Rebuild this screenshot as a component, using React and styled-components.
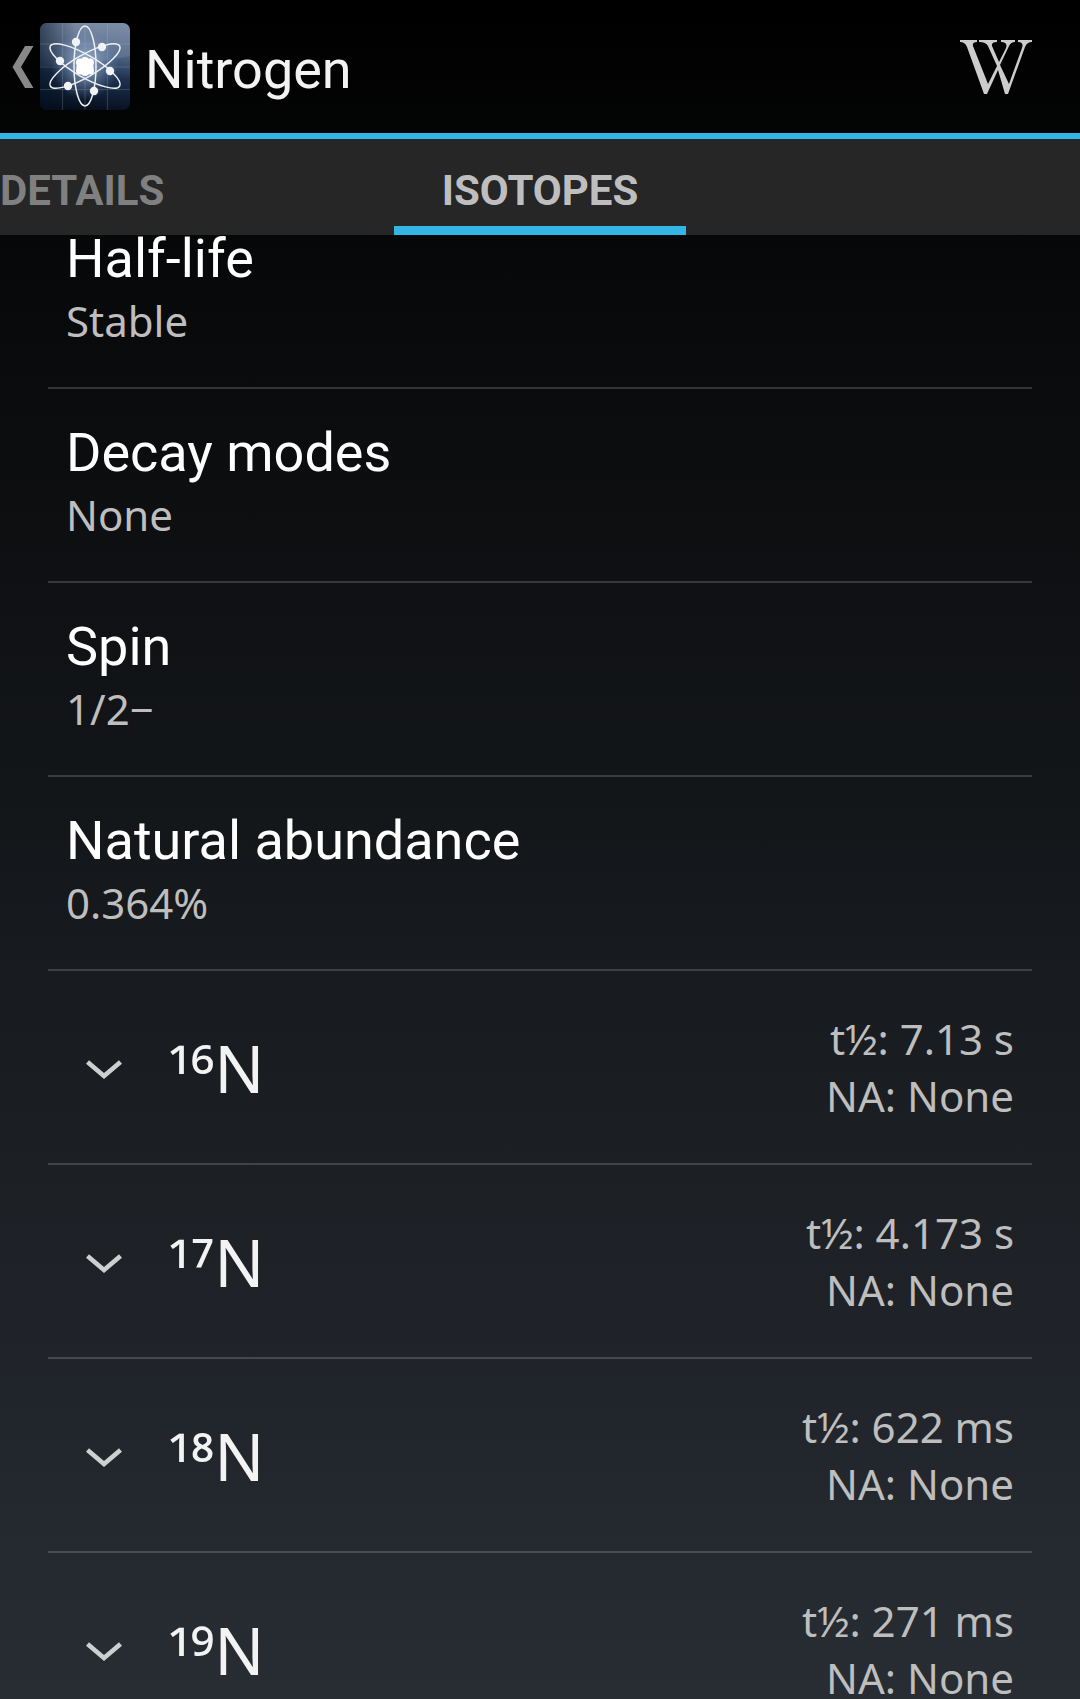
import React, { useState } from "react";
import styled, { createGlobalStyle } from "styled-components";

const GlobalStyle = createGlobalStyle`
  *, *::before, *::after { box-sizing: border-box; }
  html { background: #000; }
  body { margin: 0; font-family: "Noto Sans", "Open Sans", sans-serif; color: #f3f3f3; }
  h1, h2, p, ul { margin: 0; padding: 0; }
  button { border: 0; padding: 0; margin: 0; background: none; color: inherit; font: inherit; cursor: pointer; }
`;

const Screen = styled.div`
  display: flex;
  flex-direction: column;
  height: 100vh;
  overflow: hidden;
  background: linear-gradient(#000000, #070809 15%, #282d34);
`;

const ActionBar = styled.header`
  display: flex;
  align-items: center;
  flex: none;
  height: 139px;
  padding: 0 48px 0 12px;
  border-bottom: 6px solid #33b5e5;
`;

const UpButton = styled.button`
  display: flex;
  align-items: center;
  gap: 6px;
`;

const Title = styled.h1`
  flex: 1;
  padding: 6px 0 0 15px;
  font: 400 54px/64px Roboto, sans-serif;
`;

const WikiButton = styled.button`
  display: flex;
  color: #cccccc;
`;

const TabStrip = styled.nav`
  display: grid;
  grid-template-columns: 1fr auto 1fr;
  flex: none;
  height: 96px;
  background: #252625;
`;

const Tab = styled.button`
  justify-self: start;
  padding: ${(p) => (p.$active ? "17px 48px 0" : "17px 0 0")};
  border-bottom: 9px solid ${(p) => (p.$active ? "#33b5e5" : "transparent")};
  color: ${(p) => (p.$active ? "#bebebe" : "#808080")};
  font: 700 42px/48px Roboto, sans-serif;
`;

const Viewport = styled.main`
  flex: 1;
  min-height: 0;
  overflow: hidden;
`;

const List = styled.ul`
  margin: -40px 48px 0;
  list-style: none;
`;

const Item = styled.li`
  height: 194px;
  border-bottom: 2px solid rgba(255, 255, 255, 0.17);
`;

const Property = styled.div`
  display: flex;
  flex-direction: column;
  gap: 2px;
  padding: 32px 18px 0;
`;

const PropertyName = styled.h2`
  color: #ffffff;
  font: 400 54px/63px Roboto, sans-serif;
`;

const Secondary = styled.p`
  color: #bebebe;
  font-size: 42px;
  line-height: 57px;
`;

const IsotopeButton = styled.button`
  display: flex;
  align-items: center;
  width: 100%;
  height: 100%;
  padding: 0 18px 0 38px;
`;

const Nuclide = styled.span`
  flex: 1;
  padding-left: 46px;
  text-align: left;
  font-size: 66px;
  line-height: 90px;
`;

const Mass = styled.span`
  line-height: 0;
  vertical-align: -8px;
`;

const Summary = styled.div`
  text-align: right;
`;

const properties = [
  { name: "Half-life", value: "Stable" },
  { name: "Decay modes", value: "None" },
  { name: "Spin", value: "1/2−" },
  { name: "Natural abundance", value: "0.364%" },
];

const isotopes = [
  { mass: "¹⁶", halfLife: "7.13 s", abundance: "None" },
  { mass: "¹⁷", halfLife: "4.173 s", abundance: "None" },
  { mass: "¹⁸", halfLife: "622 ms", abundance: "None" },
  { mass: "¹⁹", halfLife: "271 ms", abundance: "None" },
];

const electrons = [
  [36, 19],
  [62, 24],
  [20, 38],
  [70, 48],
  [28, 63],
  [54, 68],
];

function BackArrow() {
  return (
    <svg width="22" height="42" viewBox="0 0 22 42" aria-hidden="true">
      <path d="M13 0H21.5L9 21L21.5 42H13L0.5 21Z" fill="#888" />
    </svg>
  );
}

function AtomIcon() {
  return (
    <svg width="90" height="87" viewBox="0 0 90 87" aria-hidden="true">
      <defs>
        <linearGradient id="sky" x1="0.5" y1="0" x2="0.4" y2="1">
          <stop offset="0" stopColor="#72839c" />
          <stop offset="0.35" stopColor="#4c6282" />
          <stop offset="0.6" stopColor="#1c304e" />
          <stop offset="1" stopColor="#050d1b" />
        </linearGradient>
        <linearGradient id="shade" x1="0" y1="0" x2="1" y2="0">
          <stop offset="0" stopColor="#04101f" stopOpacity="0.55" />
          <stop offset="0.4" stopColor="#04101f" stopOpacity="0" />
        </linearGradient>
        <radialGradient id="glow">
          <stop offset="0" stopColor="#e4efff" stopOpacity="0.85" />
          <stop offset="0.4" stopColor="#a9c1e4" stopOpacity="0.45" />
          <stop offset="1" stopColor="#7f9cc6" stopOpacity="0" />
        </radialGradient>
        <clipPath id="tile">
          <rect width="90" height="87" rx="7" />
        </clipPath>
      </defs>
      <g clipPath="url(#tile)">
        <rect width="90" height="87" fill="url(#sky)" />
        <path d="M0 43Q50 42 90 33V0H0Z" fill="#a3b4cc" opacity="0.18" />
        <rect width="90" height="87" fill="url(#shade)" />
        <path d="M22.5 0V87M45 0V87M67.5 0V87M0 21H90M0 44H90M0 66.5H90" stroke="#b7cae4" strokeOpacity="0.2" strokeWidth="1.2" />
        <circle cx="45" cy="43" r="34" fill="url(#glow)" />
      </g>
      <g fill="none" stroke="#eceff4" strokeWidth="1.5">
        {[0, 60, 120].map((angle) => (
          <ellipse key={angle} cx="45" cy="43" rx="11" ry="40" transform={`rotate(${angle} 45 43)`} />
        ))}
      </g>
      <g fill="#f0f2f5">
        {electrons.map(([x, y]) => (
          <circle key={`${x}-${y}`} cx={x} cy={y} r="4.2" />
        ))}
        <g fill="#ffffff">
          <circle cx="45" cy="43.5" r="7" />
          <circle cx="45" cy="38" r="4" />
          <circle cx="40" cy="39.5" r="4" />
          <circle cx="50" cy="39.5" r="4" />
          <circle cx="39.5" cy="44" r="3" />
          <circle cx="50.5" cy="44" r="3" />
          <circle cx="40" cy="47.5" r="4" />
          <circle cx="50" cy="47.5" r="4" />
          <circle cx="45" cy="49" r="4" />
        </g>
      </g>
    </svg>
  );
}

function WikipediaLogo() {
  return (
    <svg width="72" height="54" viewBox="0 0 72 54" fill="currentColor" aria-hidden="true">
      <path d="M0 0H17V2Q12 2 13 6L28 44L37 26L28 6Q26 2 19 2V0H37V2Q31 2 32 6L39 22L46 8Q48 2 41 2V0H55V2Q51 2 49 6L40 25L49 44L62 8Q64 2 58 2V0H72V2Q67 2 65 7L48 54H45L38 30L27 54H24L7 7Q5 2 0 2Z" />
    </svg>
  );
}

function ExpandArrow() {
  return (
    <svg width="36" height="24" viewBox="0 0 36 24" aria-hidden="true">
      <path d="M1.5 7L18 21L34.5 7" fill="none" stroke="#cdcfd0" strokeWidth="4.6" />
    </svg>
  );
}

export default function App() {
  const [tab, setTab] = useState("Isotopes");
  return (
    <Screen>
      <GlobalStyle />
      <ActionBar>
        <UpButton type="button" aria-label="Navigate up">
          <BackArrow />
          <AtomIcon />
        </UpButton>
        <Title>Nitrogen</Title>
        <WikiButton type="button" aria-label="Wikipedia">
          <WikipediaLogo />
        </WikiButton>
      </ActionBar>
      <TabStrip>
        {["Details", "Isotopes"].map((name) => (
          <Tab key={name} type="button" $active={tab === name} onClick={() => setTab(name)}>
            {name.toUpperCase()}
          </Tab>
        ))}
      </TabStrip>
      <Viewport>
        <List>
          {properties.map((property) => (
            <Item key={property.name}>
              <Property>
                <PropertyName>{property.name}</PropertyName>
                <Secondary>{property.value}</Secondary>
              </Property>
            </Item>
          ))}
          {isotopes.map((isotope) => (
            <Item key={isotope.mass}>
              <IsotopeButton type="button" aria-expanded="false">
                <ExpandArrow />
                <Nuclide>
                  <Mass>{isotope.mass}</Mass>N
                </Nuclide>
                <Summary>
                  <Secondary>t½: {isotope.halfLife}</Secondary>
                  <Secondary>NA: {isotope.abundance}</Secondary>
                </Summary>
              </IsotopeButton>
            </Item>
          ))}
        </List>
      </Viewport>
    </Screen>
  );
}
